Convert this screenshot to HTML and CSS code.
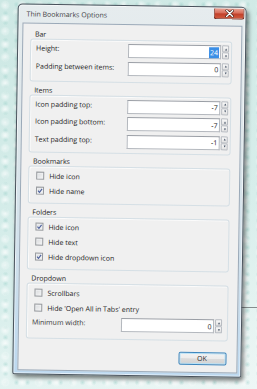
FILE: index.html
```html
<!DOCTYPE html>
<html lang="en">
<head>
<meta charset="utf-8">
<title>Thin Bookmarks Options</title>
<link rel="stylesheet" href="styles.css">
</head>
<body>
<div class="desktop">
  <div class="cord"></div>
  <div class="window">
    <div class="titlebar">
      <span class="title">Thin Bookmarks Options</span>
      <div class="close">
        <svg viewBox="0 0 12 8" width="12" height="8"><path d="M3 1 L9 7 M9 1 L3 7" stroke="#3a1a14" stroke-width="2.6" stroke-linecap="round"/><path d="M3 1 L9 7 M9 1 L3 7" stroke="#fff" stroke-width="1.4" stroke-linecap="round"/></svg>
      </div>
    </div>
    <div class="client">
      <section class="group">
        <div class="legend">Bar</div>
        <div class="box fields bar">
          <div class="row"><span class="lbl">Height:</span><div class="field"><span class="sel">24</span></div><div class="spin"><span><i class="up"></i></span><span><i class="down"></i></span></div></div>
          <div class="row"><span class="lbl">Padding between items:</span><div class="field">0</div><div class="spin"><span><i class="up"></i></span><span><i class="down"></i></span></div></div>
        </div>
      </section>
      <section class="group">
        <div class="legend">Items</div>
        <div class="box fields items">
          <div class="row"><span class="lbl">Icon padding top:</span><div class="field">-7</div><div class="spin"><span><i class="up"></i></span><span><i class="down"></i></span></div></div>
          <div class="row"><span class="lbl">Icon padding bottom:</span><div class="field">-7</div><div class="spin"><span><i class="up"></i></span><span><i class="down"></i></span></div></div>
          <div class="row"><span class="lbl">Text padding top:</span><div class="field">-1</div><div class="spin"><span><i class="up"></i></span><span><i class="down"></i></span></div></div>
        </div>
      </section>
      <section class="group">
        <div class="legend">Bookmarks</div>
        <div class="box checks">
          <div class="check"><span class="cb"></span>Hide icon</div>
          <div class="check"><span class="cb on"><svg viewBox="0 0 6 6" width="6" height="6"><path d="M1 3.1 L2.5 4.7 L5.1 1.2" stroke="#4b5f9c" stroke-width="1.1" fill="none"/></svg></span>Hide name</div>
        </div>
      </section>
      <section class="group">
        <div class="legend">Folders</div>
        <div class="box checks">
          <div class="check"><span class="cb on"><svg viewBox="0 0 6 6" width="6" height="6"><path d="M1 3.1 L2.5 4.7 L5.1 1.2" stroke="#4b5f9c" stroke-width="1.1" fill="none"/></svg></span>Hide icon</div>
          <div class="check"><span class="cb"></span>Hide text</div>
          <div class="check"><span class="cb on"><svg viewBox="0 0 6 6" width="6" height="6"><path d="M1 3.1 L2.5 4.7 L5.1 1.2" stroke="#4b5f9c" stroke-width="1.1" fill="none"/></svg></span>Hide dropdown icon</div>
        </div>
      </section>
      <section class="group">
        <div class="legend">Dropdown</div>
        <div class="box checks dropdown">
          <div class="check"><span class="cb"></span>Scrollbars</div>
          <div class="check"><span class="cb"></span>Hide 'Open All in Tabs' entry</div>
          <div class="row minw"><span class="lbl">Minimum width:</span><div class="field">0</div><div class="spin"><span><i class="up"></i></span><span><i class="down"></i></span></div></div>
        </div>
      </section>
      <div class="actions"><button class="ok">OK</button></div>
    </div>
  </div>
</div>
</body>
</html>
```
FILE: styles.css
```css
html, body {
  margin: 0;
  padding: 0;
  width: 257px;
  height: 389px;
  overflow: hidden;
}

body {
  font-family: "Open Sans", "Noto Sans", sans-serif;
  font-size: 7px;
  color: #1c1c1c;
}

.desktop {
  position: relative;
  width: 257px;
  height: 389px;
  overflow: hidden;
  background-color: #c9e6e2;
  background-image:
    radial-gradient(circle at 30% 40%, rgba(255,255,255,0.75) 0, rgba(255,255,255,0) 5px),
    radial-gradient(circle at 70% 65%, rgba(255,255,255,0.6) 0, rgba(255,255,255,0) 4px),
    radial-gradient(circle at 50% 50%, rgba(160,210,204,0.5) 0, rgba(160,210,204,0) 3px),
    linear-gradient(160deg, #cde8e4 0%, #d7eeeb 60%, #eef7f6 100%);
  background-size: 17px 13px, 23px 19px, 11px 9px, 100% 100%;
}

.cord {
  position: absolute;
  left: 236px;
  top: 307px;
  width: 21px;
  height: 1px;
  background: #858c8d;
}

.window {
  position: absolute;
  left: 15px;
  top: 5px;
  width: 229px;
  height: 371px;
  box-sizing: border-box;
  border: 1px solid #49525c;
  border-radius: 5px 5px 2px 2px;
  background: linear-gradient(#e6ecee 0%, #dde6ea 35%, #cfe0ec 70%, #bcd8ef 100%);
  padding: 0 3.5px 3.5px;
  display: flex;
  flex-direction: column;
  transform: rotate(0.85deg);
  box-shadow: 2px 3px 4px rgba(0,0,0,0.5), inset 0 0 0 1px rgba(255,255,255,0.6);
}

.titlebar {
  height: 18px;
  flex: none;
  display: flex;
  align-items: center;
}

.title {
  padding-left: 4.5px;
  color: #3c4044;
  font-size: 7px;
  margin-top: 1px;
}

.close {
  position: absolute;
  top: 0.5px;
  right: 1px;
  width: 31px;
  height: 11.5px;
  box-sizing: border-box;
  border: 1px solid #7a2c20;
  border-top: none;
  border-radius: 0 0 3px 3px;
  background: linear-gradient(#e9a394 0%, #d86f5c 45%, #c2402a 55%, #cf5a3f 100%);
  display: flex;
  align-items: center;
  justify-content: center;
}

.client {
  flex: 1;
  box-sizing: border-box;
  background: #f0f0f0;
  border: 1px solid #9aa9b8;
  padding: 7px 8.5px 0 7.5px;
  display: flex;
  flex-direction: column;
}

.group + .group {
  margin-top: 5px;
}

.legend {
  height: 8px;
  line-height: 8px;
  padding-left: 4.7px;
  color: #1a1a1a;
}

.box {
  border: 1px solid #d5dfe5;
  border-radius: 3px;
  box-shadow: inset 1px 1px 0 #fbfbfb;
  display: flex;
  flex-direction: column;
}

.fields {
  padding: 3px 2px 6px 5px;
  gap: 3.5px;
}

.fields.items {
  padding-bottom: 4px;
}

.checks {
  padding: 4px 5px 6px 6px;
  gap: 4px;
}

.checks.dropdown {
  padding-bottom: 7px;
}

.row {
  display: flex;
  align-items: center;
  height: 14px;
}

.lbl {
  width: 92px;
  align-self: flex-start;
  line-height: 11px;
  white-space: nowrap;
}

.minw {
  margin-top: -0.5px;
  margin-left: -1px;
}

.minw .lbl {
  width: 91px;
  color: #333;
}

.minw .field {
  width: 95px;
}

.field {
  width: 93px;
  height: 14px;
  box-sizing: border-box;
  border: 1px solid #b4b8be;
  border-top-color: #9a9ea5;
  background: #fff;
  display: flex;
  justify-content: flex-end;
  align-items: center;
  padding-right: 1.5px;
  color: #222;
}

.sel {
  background: #3a8ee6;
  color: #fff;
  height: 11px;
  line-height: 11px;
  padding: 0 0.5px;
}

.spin {
  width: 7px;
  height: 14px;
  margin-left: 1px;
  display: flex;
  flex-direction: column;
}

.spin span {
  flex: 1;
  box-sizing: border-box;
  border: 1px solid #b8bcc2;
  border-radius: 1px;
  background: linear-gradient(#fafafa, #e2e2e2);
  display: flex;
  align-items: center;
  justify-content: center;
}

.up {
  width: 0;
  height: 0;
  border-left: 1.5px solid transparent;
  border-right: 1.5px solid transparent;
  border-bottom: 2px solid #3c4a5e;
}

.down {
  width: 0;
  height: 0;
  border-left: 1.5px solid transparent;
  border-right: 1.5px solid transparent;
  border-top: 2px solid #3c4a5e;
}

.check {
  display: flex;
  align-items: center;
  height: 11px;
  gap: 5px;
  padding-left: 1px;
}

.cb {
  width: 8px;
  height: 8px;
  box-sizing: border-box;
  border: 1px solid #979a9e;
  background: linear-gradient(135deg, #d6d8db, #f7f7f7);
  box-shadow: inset 0 0 0 1px #eef0f2;
  display: flex;
  align-items: center;
  justify-content: center;
}

.actions {
  display: flex;
  justify-content: flex-end;
  margin-top: 11px;
  padding-right: 1.5px;
}

.ok {
  width: 48px;
  height: 13px;
  box-sizing: border-box;
  margin: 0;
  padding: 0;
  border: 1px solid #3d86bd;
  border-radius: 2px;
  background: linear-gradient(#f3f3f3 0%, #ececec 48%, #dcdcdc 52%, #d2d2d2 100%);
  box-shadow: inset 0 0 0 1px #b8e2f7;
  font-family: "Open Sans", "Noto Sans", sans-serif;
  font-size: 7px;
  color: #2a2a2a;
  line-height: 11px;
}
```
